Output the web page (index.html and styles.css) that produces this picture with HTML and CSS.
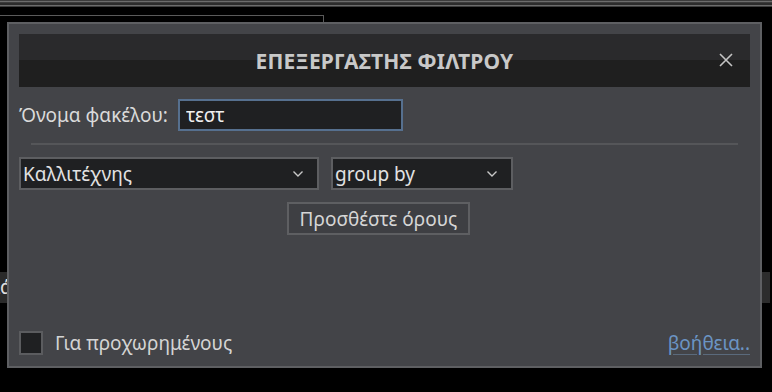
FILE: index.html
```html
<!DOCTYPE html>
<html lang="el">
  <head>
    <meta charset="UTF-8" />
    <meta name="viewport" content="width=device-width, initial-scale=1.0" />
    <title>Επεξεργαστής φίλτρου</title>
    <link rel="stylesheet" href="styles.css">
  </head>

  <body>
    <div class="topbar">
      <div class="topbar-line dark"></div>
      <div class="topbar-line light"></div>
      <div class="topbar-line dark"></div>
      <div class="topbar-line mid"></div>
      <div class="topbar-line mid"></div>
      <div class="topbar-line light"></div>
      <div class="topbar-line dark"></div>
    </div>

    <div class="backdrop">
      <div class="back-box"></div>
      <div class="back-left">ιά</div>
      <div class="back-right"></div>
    </div>

    <div class="dialog">
      <div class="dialog-header">
        <h1>ΕΠΕΞΕΡΓΑΣΤΗΣ ΦΙΛΤΡΟΥ</h1>
        <button class="close-button" aria-label="Κλείσιμο">
          <svg width="14" height="14" viewBox="0 0 14 14">
            <path d="M1 1 L13 13 M13 1 L1 13" stroke="#c4c4c4" stroke-width="1.6" fill="none" />
          </svg>
        </button>
      </div>

      <div class="name-row">
        <label for="folderName">Όνομα φακέλου:</label>
        <input type="text" id="folderName" value="τεστ" />
      </div>

      <hr class="separator" />

      <div class="rule-row">
        <div class="select wide">
          <span>Καλλιτέχνης</span>
          <svg width="12" height="8" viewBox="0 0 12 8">
            <path d="M1.5 1.5 L6 6 L10.5 1.5" stroke="#c8c8c8" stroke-width="1.4" fill="none" />
          </svg>
        </div>
        <div class="select narrow">
          <span>group by</span>
          <svg width="12" height="8" viewBox="0 0 12 8">
            <path d="M1.5 1.5 L6 6 L10.5 1.5" stroke="#c8c8c8" stroke-width="1.4" fill="none" />
          </svg>
        </div>
      </div>

      <div class="add-row">
        <button class="add-button">Προσθέστε όρους</button>
      </div>

      <div class="dialog-footer">
        <label class="check">
          <span class="check-box"></span>
          Για προχωρημένους
        </label>
        <a href="#" class="help-link">βοήθεια..</a>
      </div>
    </div>
  </body>
</html>
```

FILE: styles.css
```css
:root {
  --dialog-bg: #434448;
  --dialog-border: #5e5f62;
  --field-bg: #1f2022;
  --field-border: #5d5e61;
  --text-color: #dadada;
  --link-color: #6b94c4;
}

* {
  box-sizing: border-box;
}

body {
  margin: 0;
  width: 772px;
  height: 392px;
  background-color: #000;
  font-family: "Noto Sans", "Open Sans", sans-serif;
  color: var(--text-color);
  overflow: hidden;
  position: relative;
}

.topbar {
  display: flex;
  flex-direction: column;
}

.topbar-line {
  height: 1px;
}

.topbar-line.dark {
  background-color: #3c3c3c;
}

.topbar-line.mid {
  background-color: #2c2c2c;
}

.topbar-line.light {
  background-color: #6c6c6c;
}

.back-box {
  position: absolute;
  left: 0;
  top: 15px;
  width: 324px;
  height: 20px;
  border-top: 1px solid #5a5a5a;
  border-right: 1px solid #5a5a5a;
}

.back-left {
  position: absolute;
  left: 0;
  top: 272px;
  width: 20px;
  height: 31px;
  background-color: #2a2a2a;
  color: #e0e0e0;
  font-size: 19px;
  line-height: 31px;
  text-indent: -6px;
}

.back-right {
  position: absolute;
  left: 762px;
  top: 272px;
  width: 8px;
  height: 31px;
  background-color: #2c2c2c;
}

.dialog {
  position: absolute;
  left: 7px;
  top: 22px;
  width: 755px;
  height: 346px;
  background-color: var(--dialog-bg);
  border: 2px solid var(--dialog-border);
  padding: 10px;
  display: flex;
  flex-direction: column;
}

.dialog-header {
  height: 53px;
  background: linear-gradient(#2a2a2c 0, #2a2a2c 50%, #1f1f1f 50%, #1f1f1f 100%);
  display: flex;
  align-items: center;
  justify-content: center;
  position: relative;
}

.dialog-header h1 {
  margin: 0;
  font-size: 21px;
  font-weight: 700;
  color: #c8c8c8;
  letter-spacing: 0.2px;
}

.close-button {
  position: absolute;
  right: 17px;
  top: 19px;
  width: 14px;
  height: 14px;
  padding: 0;
  border: none;
  background: none;
  display: flex;
}

.name-row {
  display: flex;
  align-items: center;
  margin-top: 12px;
}

.name-row label {
  font-size: 19px;
  width: 159px;
}

.name-row input {
  width: 225px;
  height: 32px;
  background-color: var(--field-bg);
  border: 2px solid #56708f;
  color: #f0f0f0;
  font-family: inherit;
  font-size: 19px;
  padding: 0 6px;
  outline: none;
}

.separator {
  border: none;
  border-top: 2px solid #555659;
  margin: 12px 12px 0 12px;
}

.rule-row {
  display: flex;
  gap: 12px;
  margin-top: 12px;
}

.select {
  height: 33px;
  background-color: var(--field-bg);
  border: 2px solid var(--field-border);
  display: flex;
  align-items: center;
  justify-content: space-between;
  padding: 0 13px 0 2px;
  font-size: 19px;
  color: #e2e2e2;
}

.select.wide {
  width: 300px;
}

.select.narrow {
  width: 182px;
}

.add-row {
  display: flex;
  justify-content: center;
  padding-right: 12px;
  margin-top: 12px;
}

.add-button {
  width: 183px;
  height: 33px;
  background-color: #3e3f43;
  border: 2px solid #5e5f62;
  color: #d6d6d6;
  font-family: inherit;
  font-size: 19px;
  padding: 0;
}

.dialog-footer {
  margin-top: auto;
  display: flex;
  align-items: center;
  justify-content: space-between;
}

.check {
  display: flex;
  align-items: center;
  gap: 12px;
  font-size: 19px;
  color: #d4d4d4;
}

.check-box {
  width: 24px;
  height: 24px;
  background-color: var(--field-bg);
  border: 2px solid #5b5c5f;
}

.help-link {
  color: var(--link-color);
  font-size: 19px;
  text-decoration: underline;
  text-decoration-color: #5a6a7c;
  text-underline-offset: 4px;
}
```
